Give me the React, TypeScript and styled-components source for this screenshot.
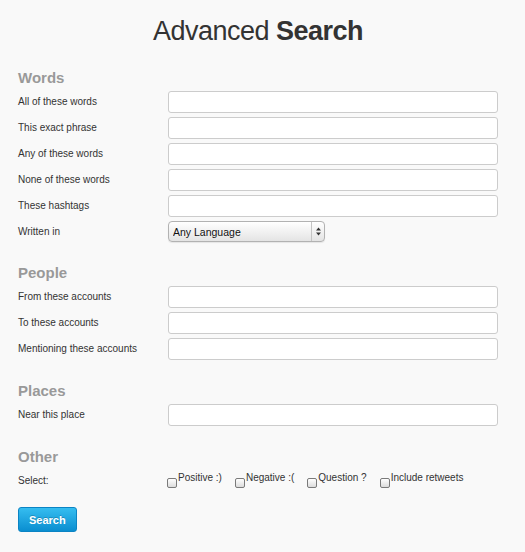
import React from "react";
import styled, { createGlobalStyle } from "styled-components";

const GlobalStyle = createGlobalStyle`
  html, body {
    margin: 0;
    padding: 0;
    background: #f9f9f9;
  }
  body {
    font-family: "Liberation Sans", Arial, sans-serif;
    color: #333;
  }
`;

const wordFields = [
  "All of these words",
  "This exact phrase",
  "Any of these words",
  "None of these words",
  "These hashtags",
];

const peopleFields = [
  "From these accounts",
  "To these accounts",
  "Mentioning these accounts",
];

const filters = ["Positive :)", "Negative :(", "Question ?", "Include retweets"];

const SelectArrows = () => (
  <svg width="5" height="9" viewBox="0 0 5 9">
    <path d="M2.5 0.5 L5 3.5 L0 3.5 Z" fill="#333" />
    <path d="M2.5 8.5 L5 5.5 L0 5.5 Z" fill="#333" />
  </svg>
);

export default function App(): React.ReactElement {
  return (
    <React.Fragment>
      <GlobalStyle />
      <Page>
        <Title>
          Advanced <strong>Search</strong>
        </Title>

        <Section>
          <Heading>Words</Heading>
          {wordFields.map((label) => (
            <Row key={label}>
              <Label>{label}</Label>
              <TextInput type="text" />
            </Row>
          ))}
          <Row>
            <Label>Written in</Label>
            <SelectBox>
              <Select defaultValue="any">
                <option value="any">Any Language</option>
              </Select>
              <ArrowCell>
                <SelectArrows />
              </ArrowCell>
            </SelectBox>
          </Row>
        </Section>

        <Section>
          <Heading>People</Heading>
          {peopleFields.map((label) => (
            <Row key={label}>
              <Label>{label}</Label>
              <TextInput type="text" />
            </Row>
          ))}
        </Section>

        <Section>
          <Heading>Places</Heading>
          <Row>
            <Label>Near this place</Label>
            <TextInput type="text" />
          </Row>
        </Section>

        <Section>
          <Heading>Other</Heading>
          <Row>
            <Label>Select:</Label>
            <Options>
              {filters.map((name) => (
                <Option key={name}>
                  <Checkbox type="checkbox" />
                  <span>{name}</span>
                </Option>
              ))}
            </Options>
          </Row>
        </Section>

        <SearchButton type="button">Search</SearchButton>
      </Page>
    </React.Fragment>
  );
}

const Page = styled.div`
  width: 480px;
  padding: 15px 0 20px 18px;
  display: flex;
  flex-direction: column;
`;

const Title = styled.h1`
  margin: 0;
  font-size: 27px;
  line-height: 32px;
  font-weight: normal;
  letter-spacing: -0.5px;
  text-align: center;
  color: #333;

  strong {
    font-weight: bold;
  }
`;

const Section = styled.section`
  margin-top: 21px;
  display: flex;
  flex-direction: column;
  gap: 4px;
`;

const Heading = styled.h2`
  margin: 0;
  font-size: 15px;
  line-height: 19px;
  font-weight: bold;
  color: #999;
`;

const Row = styled.div`
  display: grid;
  grid-template-columns: 150px 330px;
  align-items: center;
`;

const Label = styled.label`
  font-size: 10px;
  line-height: 12px;
  color: #333;
`;

const TextInput = styled.input`
  box-sizing: border-box;
  width: 330px;
  height: 22px;
  margin: 0;
  padding: 0 5px;
  border: 1px solid #ccc;
  border-radius: 3px;
  background: #fff;
  font: 11px "Liberation Sans", Arial, sans-serif;
  outline: none;
`;

const SelectBox = styled.div`
  box-sizing: border-box;
  width: 157px;
  height: 21px;
  display: flex;
  border: 1px solid #b2b2b2;
  border-radius: 4px;
  background: linear-gradient(#ffffff, #e4e4e4);
  box-shadow: 0 1px 1px rgba(0, 0, 0, 0.08);
`;

const Select = styled.select`
  flex: 1;
  appearance: none;
  margin: 0;
  padding: 0 0 0 4px;
  border: none;
  background: transparent;
  font: 10.5px "Liberation Sans", Arial, sans-serif;
  color: #111;
  outline: none;
`;

const ArrowCell = styled.div`
  width: 12px;
  display: flex;
  align-items: center;
  justify-content: center;
  border-left: 1px solid #c4c4c4;
`;

const Options = styled.div`
  box-sizing: border-box;
  height: 22px;
  padding-top: 2px;
  margin-left: -1px;
  display: flex;
  align-items: flex-start;
  gap: 13px;
`;

const Option = styled.label`
  display: flex;
  align-items: flex-start;
  font-size: 10px;
  line-height: 12px;
  color: #333;
`;

const Checkbox = styled.input`
  appearance: none;
  box-sizing: border-box;
  width: 10px;
  height: 10px;
  margin: 6px 1px 0 0;
  border: 1px solid #7a7a7a;
  border-radius: 2px;
  background: linear-gradient(#ffffff, #dcdcdc);
`;

const SearchButton = styled.button`
  align-self: flex-start;
  margin-top: 15px;
  box-sizing: border-box;
  height: 25px;
  padding: 0 10px;
  border: 1px solid #0b84c4;
  border-radius: 3px;
  background: linear-gradient(#35bdf0, #0a8ed0);
  color: #fff;
  font: bold 11px "Liberation Sans", Arial, sans-serif;
  text-shadow: 0 -1px 0 rgba(0, 0, 0, 0.2);
  cursor: pointer;
`;
